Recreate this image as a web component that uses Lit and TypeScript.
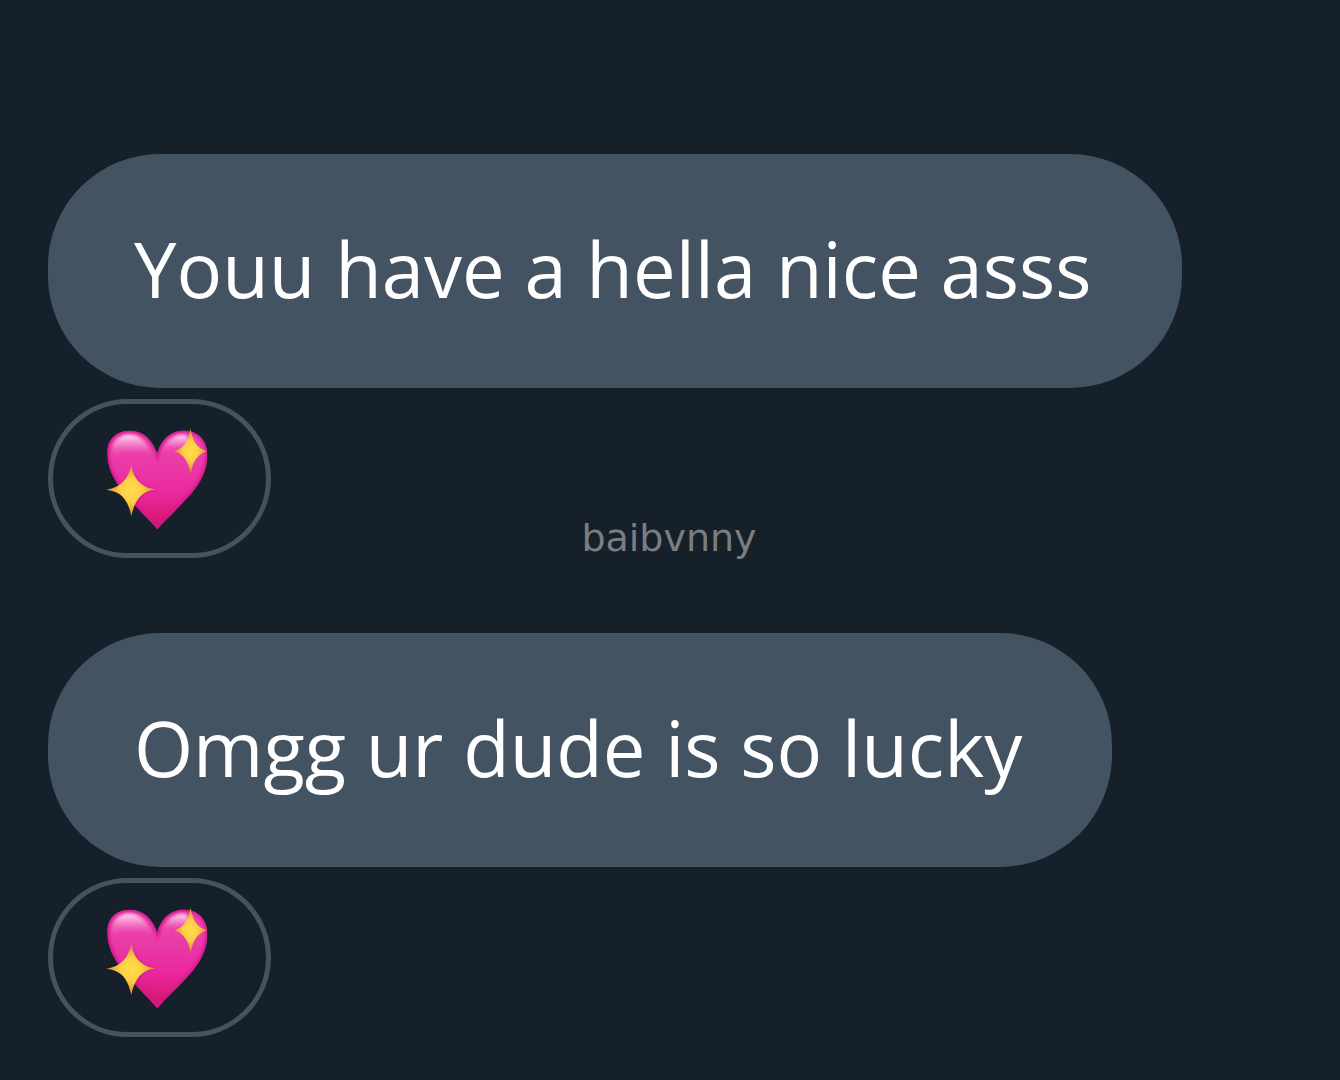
import { LitElement, html, css } from "lit";
import { customElement, property } from "lit/decorators.js";

interface Message {
  text: string;
}

const MESSAGES: Message[] = [
  { text: "Youu have a hella nice asss" },
  { text: "Omgg ur dude is so lucky" },
];

@customElement("sparkling-heart")
export class SparklingHeart extends LitElement {
  static styles = css`
    :host {
      display: block;
    }
    .icon {
      display: block;
      width: 105px;
      height: 105px;
    }
  `;

  render() {
    return html`
      <svg class="icon" viewBox="30 21 315 315" aria-hidden="true">
        <defs>
          <linearGradient id="body" x1="0" y1="0" x2="0" y2="1">
            <stop offset="0" stop-color="#ee4db0" />
            <stop offset="0.35" stop-color="#ea3aa8" />
            <stop offset="0.65" stop-color="#ea279c" />
            <stop offset="0.85" stop-color="#d91b7b" />
            <stop offset="1" stop-color="#c9186a" />
          </linearGradient>
          <linearGradient id="shine" x1="0" y1="0" x2="0" y2="1">
            <stop offset="0" stop-color="#ffe6fa" stop-opacity="0.95" />
            <stop offset="0.45" stop-color="#f99bd8" stop-opacity="0.65" />
            <stop offset="1" stop-color="#ee4db0" stop-opacity="0" />
          </linearGradient>
          <radialGradient id="gold">
            <stop offset="0" stop-color="#ffdf4a" />
            <stop offset="0.45" stop-color="#fdcd45" />
            <stop offset="1" stop-color="#d98a2c" />
          </radialGradient>
          <filter id="soft" x="-20%" y="-20%" width="140%" height="140%">
            <feGaussianBlur stdDeviation="5" />
          </filter>
          <clipPath id="outline">
            <path
              d="M187 328C165 301 125 265 86 216C56 180 37 143 37 98C37 58 64 33 103 32C144 31 174 60 187 102C197 58 229 30 270 32C311 34 337 62 337 105C337 152 315 190 287 223C250 265 210 300 187 328Z"
            />
          </clipPath>
        </defs>
        <g clip-path="url(#outline)">
          <path fill="url(#body)" d="M30 21H345V336H30Z" />
          <path
            fill="none"
            stroke="#d6128c"
            stroke-width="12"
            filter="url(#soft)"
            d="M187 328C165 301 125 265 86 216C56 180 37 143 37 98C37 58 64 33 103 32C144 31 174 60 187 102C197 58 229 30 270 32C311 34 337 62 337 105C337 152 315 190 287 223C250 265 210 300 187 328Z"
          />
          <path
            fill="url(#shine)"
            filter="url(#soft)"
            d="M50 112C46 66 70 44 103 44C134 44 158 66 170 106C145 88 75 90 50 112Z"
          />
          <path
            fill="url(#shine)"
            filter="url(#soft)"
            d="M201 100C210 62 236 43 266 44C287 46 284 74 268 84C245 78 221 82 201 100Z"
          />
        </g>
        <path
          fill="#b80f72"
          fill-opacity="0.45"
          filter="url(#soft)"
          d="M118 150C127 190 140 200 180 208C140 220 129 235 120 280Z"
        />
        <path
          fill="url(#gold)"
          d="M109 135C115 172 134 202 182 208C136 215 120 241 109 288C99 241 82 215 34 209C80 202 101 174 109 135Z"
        />
        <path
          fill="url(#gold)"
          d="M287 25C291 60 305 86 337 94C306 102 293 127 287 161C281 127 267 102 237 94C268 86 282 60 287 25Z"
        />
      </svg>
    `;
  }
}

@customElement("chat-message")
export class ChatMessage extends LitElement {
  @property() text = "";

  static styles = css`
    :host {
      display: flex;
      flex-direction: column;
      align-items: flex-start;
      gap: 11px;
    }
    .bubble {
      margin: 0;
      padding: 60px 90px 64px 86px;
      border-radius: 112px;
      background: #435362;
      color: #fff;
      font: 400 76px/110px "Open Sans", "Noto Sans", sans-serif;
    }
    .reaction {
      display: block;
      margin: 0;
      padding: 23px 56px 21px 52px;
      border: 5px solid #435362;
      border-radius: 80px;
      background: transparent;
      cursor: pointer;
    }
  `;

  render() {
    return html`
      <p class="bubble">${this.text}</p>
      <button class="reaction" type="button" aria-label="Sparkling heart">
        <sparkling-heart></sparkling-heart>
      </button>
    `;
  }
}

@customElement("app-root")
export class AppRoot extends LitElement {
  static styles = css`
    :host {
      display: block;
      position: relative;
      box-sizing: border-box;
      min-height: 100vh;
      padding: 154px 48px 43px;
      background: #16202a;
    }
    .thread {
      display: flex;
      flex-direction: column;
      gap: 75px;
    }
    .watermark {
      position: absolute;
      inset: 0;
      display: grid;
      place-items: center;
      padding: 0 2px 4px 0;
      color: #7b7d7f;
      font: 38px/44px "DejaVu Sans", sans-serif;
      pointer-events: none;
    }
  `;

  render() {
    return html`
      <main class="thread">
        ${MESSAGES.map((m) => html`<chat-message .text=${m.text}></chat-message>`)}
      </main>
      <div class="watermark">baibvnny</div>
    `;
  }
}
